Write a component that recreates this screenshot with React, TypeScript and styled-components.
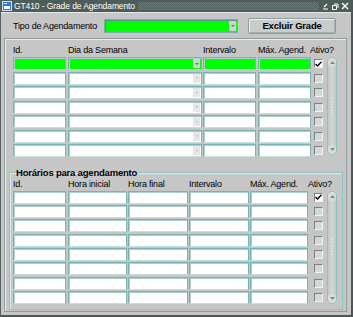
import React from 'react'
import styled, { createGlobalStyle } from 'styled-components'

const GlobalStyle = createGlobalStyle`
  html, body { margin: 0; padding: 0; background: #c6c6c6; }
  body {
    font-family: 'Liberation Sans', Arial, sans-serif;
    font-size: 9px;
    letter-spacing: -0.2px;
    color: #000;
  }
  * { box-sizing: border-box; }
`

const Window = styled.div`
  width: 353px;
  height: 317px;
  background: #c6c6c6;
  border-left: 1px solid #55625f;
  border-right: 2px solid #4c5856;
  border-bottom: 2px solid #4c5856;
  display: flex;
  flex-direction: column;
  overflow: hidden;
`

const TitleBar = styled.div`
  height: 12px;
  flex: none;
  background: #4e5c5a;
  display: flex;
  align-items: center;
  padding: 0 2px 0 1px;
  color: #fff;
  font-size: 8.5px;
  letter-spacing: -0.1px;
`

const TitleText = styled.span`
  margin-left: 2px;
  white-space: nowrap;
`

const Dots = styled.div`
  flex: 1;
  height: 8px;
  margin: 0 3px 0 3px;
  background-image: repeating-conic-gradient(#6f7d7b 0 25%, transparent 0 50%);
  background-size: 2px 2px;
`

const WinButtons = styled.div`
  display: flex;
  gap: 2px;
  align-items: center;
`

const TopRow = styled.div`
  height: 26px;
  flex: none;
  display: flex;
  align-items: center;
  padding-left: 12px;
  border-top: 1px solid #e4e8e8;
`

const TopLabel = styled.div`
  width: 91px;
  white-space: nowrap;
`

const Combo = styled.div`
  width: 134px;
  height: 14px;
  background: #00ff00;
  border: 1px solid #7aaeae;
  box-shadow: inset 1px 1px 0 #5c9090;
  display: flex;
  justify-content: flex-end;
  padding: 1px;
`

const ArrowStrip = styled.div<{ $tone: 'dark' | 'light' }>`
  width: 7px;
  height: 100%;
  background: ${(p) => (p.$tone === 'dark' ? '#cfd3d3' : '#e6e8e8')};
  display: flex;
  align-items: center;
  justify-content: center;
  &::after {
    content: '';
    border-left: 2px solid transparent;
    border-right: 2px solid transparent;
    border-top: 2px solid ${(p) => (p.$tone === 'dark' ? '#6f7777' : '#c8cccc')};
  }
`

const Button = styled.div`
  margin-left: 10px;
  width: 88px;
  height: 16px;
  border: 1px solid #8a9c9c;
  border-radius: 2px;
  background: #cacccc;
  box-shadow: inset 1px 1px 0 #eef0f0, inset -1px -1px 0 #a9b0b0;
  font-weight: bold;
  font-size: 9.5px;
  display: flex;
  align-items: center;
  justify-content: center;
  white-space: nowrap;
`

const Canvas = styled.div`
  flex: 1;
  margin: 0 4px 3px 3px;
  border: 1px solid #8f9b9b;
  box-shadow: inset 1px 1px 0 #eceeee;
  padding-top: 4px;
  display: flex;
  flex-direction: column;
`

const Section = styled.div`
  padding-left: 8px;
`

const HeaderRow = styled.div<{ $h: number }>`
  height: ${(p) => p.$h}px;
  display: flex;
  align-items: center;
  white-space: nowrap;
`

const HeadCell = styled.div<{ $w?: number; $gap: number }>`
  width: ${(p) => (p.$w ? `${p.$w}px` : 'auto')};
  margin-left: ${(p) => p.$gap}px;
  flex: none;
`

const Body = styled.div`
  display: flex;
  align-items: flex-start;
`

const Rows = styled.div`
  display: flex;
  flex-direction: column;
`

const Row = styled.div<{ $h: number }>`
  height: ${(p) => p.$h}px;
  display: flex;
  align-items: flex-start;
`

const Cell = styled.div<{ $w: number; $gap: number; $green?: boolean }>`
  width: ${(p) => p.$w}px;
  height: 13px;
  margin-left: ${(p) => p.$gap}px;
  flex: none;
  background: ${(p) => (p.$green ? '#00ff00' : '#ffffff')};
  border: 1px solid #7cb2b2;
  border-bottom-color: #c9dede;
  box-shadow: inset 1px 1px 0 #a9cfcf;
  display: flex;
  justify-content: flex-end;
  padding: 1px;
`

const Check = styled.div<{ $gap: number; $on?: boolean }>`
  width: 9px;
  height: 9px;
  margin: 2px 0 0 ${(p) => p.$gap}px;
  flex: none;
  border: 1px solid;
  border-color: #7c8282 #f2f2f2 #f2f2f2 #7c8282;
  background: ${(p) => (p.$on ? '#ffffff' : '#d6d8d8')};
  display: flex;
  align-items: center;
  justify-content: center;
`

const Scroll = styled.div<{ $h: number }>`
  width: 10px;
  height: ${(p) => p.$h}px;
  margin-left: 4px;
  flex: none;
  border: 1px solid #8fc1c1;
  border-radius: 5px;
  background: linear-gradient(90deg, #c2c6c6, #d4d6d6 50%, #c2c6c6);
  display: flex;
  flex-direction: column;
  align-items: center;
  justify-content: space-between;
`

const ScrollBtn = styled.div`
  width: 8px;
  height: 9px;
  border-radius: 4px;
  background: #d8dcdc;
  display: flex;
  align-items: center;
  justify-content: center;
`

const Grip = styled.div`
  width: 4px;
  height: 18px;
  background-image: radial-gradient(circle, #eef4f4 0.8px, transparent 1px);
  background-size: 3px 3px;
`

const Frame = styled.fieldset`
  margin: 9px 3px 0 4px;
  padding: 0 0 3px 3px;
  border: 1px solid #8fc3c3;
  box-shadow: inset 1px 1px 0 #dceaea;
  min-width: 0;
`

const Legend = styled.legend`
  margin-left: 2px;
  padding: 0 1px;
  font-weight: bold;
  font-size: 9.5px;
  line-height: 10px;
  height: 10px;
`

type Col = { w: number; gap: number; label: string; combo?: boolean; green?: boolean }

const block1: Col[] = [
  { w: 53, gap: 0, label: 'Id.', green: true },
  { w: 134, gap: 2, label: 'Dia da Semana', combo: true, green: true },
  { w: 53, gap: 1, label: 'Intervalo', green: true },
  { w: 53, gap: 2, label: 'Máx. Agend.', green: true },
]

const block2: Col[] = [
  { w: 53, gap: 0, label: 'Id.' },
  { w: 59, gap: 2, label: 'Hora inicial' },
  { w: 60, gap: 1, label: 'Hora final' },
  { w: 60, gap: 1, label: 'Intervalo' },
  { w: 58, gap: 1, label: 'Máx. Agend.' },
]

const Arrow = ({ up }: { up?: boolean }) => (
  <svg width="5" height="3" viewBox="0 0 5 3">
    <path d={up ? 'M0 3 L2.5 0 L5 3 Z' : 'M0 0 L2.5 3 L5 0 Z'} fill="#7c8a8a" />
  </svg>
)

const CheckMark = () => (
  <svg width="7" height="6" viewBox="0 0 7 6">
    <path d="M0.5 3 L2.5 5 L6.5 0.8" stroke="#000" strokeWidth="1.4" fill="none" />
  </svg>
)

const Block = ({
  cols,
  rows,
  rowH,
  headH,
  checkGap,
  activeGap,
  scrollH,
}: {
  cols: Col[]
  rows: number
  rowH: number
  headH: number
  checkGap: number
  activeGap: number
  scrollH: number
}) => (
  <div>
    <HeaderRow $h={headH}>
      {cols.map((c) => (
        <HeadCell key={c.label} $w={c.w} $gap={c.gap}>
          {c.label}
        </HeadCell>
      ))}
      <HeadCell $gap={activeGap}>Ativo?</HeadCell>
    </HeaderRow>
    <Body>
      <Rows>
        {Array.from({ length: rows }).map((_, i) => (
          <Row key={i} $h={rowH}>
            {cols.map((c) => (
              <Cell key={c.label} $w={c.w} $gap={c.gap} $green={i === 0 && c.green}>
                {c.combo && <ArrowStrip $tone={i === 0 ? 'dark' : 'light'} />}
              </Cell>
            ))}
            <Check $gap={checkGap} $on={i === 0}>
              {i === 0 && <CheckMark />}
            </Check>
          </Row>
        ))}
      </Rows>
      <Scroll $h={scrollH}>
        <ScrollBtn>
          <Arrow up />
        </ScrollBtn>
        <Grip />
        <ScrollBtn>
          <Arrow />
        </ScrollBtn>
      </Scroll>
    </Body>
  </div>
)

const FormIcon = () => (
  <svg width="10" height="10" viewBox="0 0 10 10">
    <rect x="0.5" y="0.5" width="9" height="9" fill="#2f7ad6" stroke="#cfe2f7" />
    <rect x="2" y="5" width="6" height="3" fill="#ffffff" />
    <rect x="2" y="2" width="3" height="1" fill="#ffffff" />
  </svg>
)

const WinIcons = () => (
  <WinButtons>
    <svg width="7" height="7" viewBox="0 0 7 7">
      <path d="M1 6 H6 M5 1 L2 4" stroke="#fff" strokeWidth="1.2" />
    </svg>
    <svg width="8" height="7" viewBox="0 0 8 7">
      <path d="M1.5 2.5 h4 v4 h-4 Z M3 1 h4 v4" stroke="#fff" strokeWidth="1" fill="none" />
    </svg>
    <svg width="8" height="8" viewBox="0 0 8 8">
      <path d="M1 1 L7 7 M7 1 L1 7" stroke="#fff" strokeWidth="1.4" />
    </svg>
  </WinButtons>
)

export default function App() {
  return (
    <>
      <GlobalStyle />
      <Window>
        <TitleBar>
          <FormIcon />
          <TitleText>GT410 - Grade de Agendamento</TitleText>
          <Dots />
          <WinIcons />
        </TitleBar>
        <TopRow>
          <TopLabel>Tipo de Agendamento</TopLabel>
          <Combo>
            <ArrowStrip $tone="dark" />
          </Combo>
          <Button>Excluir Grade</Button>
        </TopRow>
        <Canvas>
          <Section>
            <Block
              cols={block1}
              rows={7}
              rowH={14.5}
              headH={14}
              checkGap={3}
              activeGap={-1}
              scrollH={98}
            />
          </Section>
          <Frame>
            <Legend>Horários para agendamento</Legend>
            <Block
              cols={block2}
              rows={8}
              rowH={14.4}
              headH={13}
              checkGap={6}
              activeGap={0}
              scrollH={113}
            />
          </Frame>
        </Canvas>
      </Window>
    </>
  )
}
